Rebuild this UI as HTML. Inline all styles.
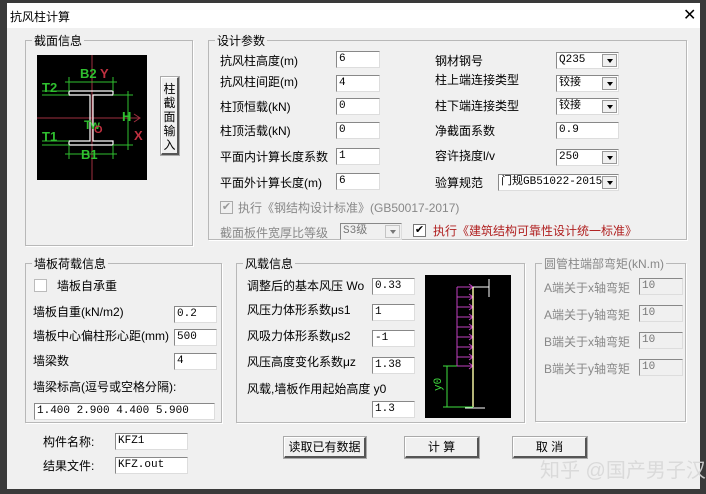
<!DOCTYPE html>
<html><head><meta charset="utf-8"><style>
*{box-sizing:border-box;margin:0;padding:0}
body{width:706px;height:494px;background:#3a3a3a;font-family:"Liberation Sans","Noto Sans CJK SC","WenQuanYi Zen Hei",sans-serif;font-size:12px;color:#000;position:relative;overflow:hidden}
.win{position:absolute;left:7px;top:3px;width:693px;height:486px;background:#f0f0f0}
.title{position:absolute;left:0;top:0;width:693px;height:25px;background:#fff}
.a{position:absolute;white-space:nowrap;margin-top:-1px}
.grp{position:absolute;border:1px solid #b8b8b8;box-shadow:1px 1px 0 #fff}
.gl{position:absolute;top:-9px;left:6px;background:#f0f0f0;padding:0 2px;font-size:12px}
.in{position:absolute;background:#fff;border-top:1px solid #888;border-left:1px solid #888;border-right:1px solid #ddd;border-bottom:1px solid #ddd;height:17px;font-size:11px;padding-left:2px;line-height:15px;font-family:"Liberation Mono","Noto Sans CJK SC",monospace}
.dis{background:#f0f0f0;color:#777}
.arr{position:absolute;right:1px;top:1px;width:15px;height:13px;background:#f0f0f0;border:1px solid #999}
.arr:after{content:"";position:absolute;left:4px;top:4px;border-left:3px solid transparent;border-right:3px solid transparent;border-top:4px solid #000}
.btn{position:absolute;background:#f0f0f0;border:1px solid #fff;border-right:2px solid #555;border-bottom:2px solid #555;text-align:center;font-size:12px;line-height:18px;outline:1px solid #aaa}
.cb{position:absolute;width:13px;height:13px;background:#fff;border:1px solid #777}
.g{color:#888}
</style></head><body>
<div class="win">
<div class="title"></div>
<div class="a" style="left:3px;top:6px;font-size:12px">抗风柱计算</div>
<div class="a" style="left:676px;top:3px;font-size:16px;font-weight:300">✕</div>

<div class="grp" style="left:18px;top:37px;width:168px;height:206px"><div class="gl">截面信息</div></div>
<svg class="a" style="left:30px;top:53px" width="110" height="125" viewBox="0 0 110 125">
<rect width="110" height="125" fill="#000"/>
<line x1="55" y1="0" x2="55" y2="125" stroke="#a03040"/>
<line x1="0" y1="63" x2="103" y2="63" stroke="#a03040"/>
<polyline points="97,59 103,63 97,67" fill="none" stroke="#a03040"/>
<path d="M32 36H76V40H56V86H76V90H32V86H53V40H32Z" fill="none" stroke="#fff" stroke-width="1.2"/>
<g stroke="#2fbf2f" fill="none">
<line x1="28" y1="27" x2="80" y2="27"/><line x1="32" y1="22" x2="32" y2="36"/><line x1="76" y1="22" x2="76" y2="36"/>
<line x1="28" y1="99" x2="80" y2="99"/><line x1="32" y1="90" x2="32" y2="104"/><line x1="76" y1="90" x2="76" y2="104"/>
<line x1="91" y1="36" x2="91" y2="95"/><line x1="76" y1="40" x2="96" y2="40"/><line x1="76" y1="90" x2="96" y2="90"/>
<line x1="5" y1="36" x2="32" y2="36"/><line x1="5" y1="40" x2="32" y2="40"/>
<line x1="5" y1="86" x2="32" y2="86"/><line x1="5" y1="90" x2="32" y2="90"/>
</g>
<g font-family="Liberation Sans" font-weight="bold" font-size="13">
<text x="43" y="23" fill="#2fbf2f">B2</text><text x="63" y="23" fill="#c03040">Y</text>
<text x="5" y="37" fill="#2fbf2f">T2</text><text x="5" y="86" fill="#2fbf2f">T1</text>
<text x="85" y="66" fill="#2fbf2f">H</text><text x="97" y="85" fill="#c03040">X</text>
<text x="44" y="104" fill="#2fbf2f">B1</text><text x="47" y="74" fill="#2fbf2f" font-size="12">Tw</text>
<text x="57" y="78" fill="#c03040" font-size="11">O</text></g>
</svg>
<div class="btn" style="left:154px;top:74px;width:18px;height:78px;line-height:14px;font-size:12px;padding-top:4px">柱<br>截<br>面<br>输<br>入</div>

<div class="grp" style="left:201px;top:37px;width:479px;height:200px"><div class="gl">设计参数</div></div>
<div class="a" style="left:213px;top:50px">抗风柱高度(m)</div><div class="in" style="left:329px;top:48px;width:44px">6</div>
<div class="a" style="left:213px;top:71px">抗风柱间距(m)</div><div class="in" style="left:329px;top:72px;width:44px">4</div>
<div class="a" style="left:213px;top:96px">柱顶恒载(kN)</div><div class="in" style="left:329px;top:95px;width:44px">0</div>
<div class="a" style="left:213px;top:120px">柱顶活载(kN)</div><div class="in" style="left:329px;top:119px;width:44px">0</div>
<div class="a" style="left:213px;top:146px">平面内计算长度系数</div><div class="in" style="left:329px;top:145px;width:44px">1</div>
<div class="a" style="left:213px;top:172px">平面外计算长度(m)</div><div class="in" style="left:329px;top:170px;width:44px">6</div>

<div class="a" style="left:428px;top:50px">钢材钢号</div><div class="in" style="left:549px;top:49px;width:63px">Q235<div class="arr"></div></div>
<div class="a" style="left:428px;top:69px">柱上端连接类型</div><div class="in" style="left:549px;top:72px;width:63px">铰接<div class="arr"></div></div>
<div class="a" style="left:428px;top:95px">柱下端连接类型</div><div class="in" style="left:549px;top:95px;width:63px">铰接<div class="arr"></div></div>
<div class="a" style="left:428px;top:120px">净截面系数</div><div class="in" style="left:549px;top:119px;width:63px">0.9</div>
<div class="a" style="left:428px;top:145px">容许挠度l/v</div><div class="in" style="left:549px;top:146px;width:63px">250<div class="arr"></div></div>
<div class="a" style="left:428px;top:172px">验算规范</div><div class="in" style="left:491px;top:171px;width:121px">门规GB51022-2015<div class="arr"></div></div>

<div class="cb" style="left:213px;top:198px;background:#f0f0f0;border-color:#aaa;color:#999;font-size:11px;line-height:11px;text-align:center">✔</div>
<div class="a g" style="left:231px;top:197px">执行《钢结构设计标准》(GB50017-2017)</div>
<div class="a g" style="left:213px;top:222px">截面板件宽厚比等级</div>
<div class="in dis" style="left:333px;top:220px;width:62px;background:#f0f0f0">S3级<div class="arr" style="opacity:.5"></div></div>
<div class="cb" style="left:406px;top:221px;font-size:11px;line-height:11px;text-align:center">✔</div>
<div class="a" style="left:426px;top:220px;color:#b02020">执行《建筑结构可靠性设计统一标准》</div>

<div class="grp" style="left:18px;top:260px;width:197px;height:160px"><div class="gl">墙板荷载信息</div></div>
<div class="cb" style="left:27px;top:276px;border-color:#bbb"></div>
<div class="a" style="left:50px;top:275px">墙板自承重</div>
<div class="a" style="left:26px;top:301px">墙板自重(kN/m2)</div><div class="in" style="left:167px;top:303px;width:43px">0.2</div>
<div class="a" style="left:26px;top:325px">墙板中心偏柱形心距(mm)</div><div class="in" style="left:167px;top:326px;width:43px">500</div>
<div class="a" style="left:26px;top:350px">墙梁数</div><div class="in" style="left:167px;top:350px;width:43px">4</div>
<div class="a" style="left:26px;top:376px">墙梁标高(逗号或空格分隔):</div>
<div class="in" style="left:27px;top:400px;width:181px">1.400 2.900 4.400 5.900</div>

<div class="grp" style="left:229px;top:260px;width:289px;height:160px"><div class="gl">风载信息</div></div>
<div class="a" style="left:240px;top:275px">调整后的基本风压 Wo</div><div class="in" style="left:365px;top:275px;width:43px">0.33</div>
<div class="a" style="left:240px;top:299px">风压力体形系数μs1</div><div class="in" style="left:365px;top:301px;width:43px">1</div>
<div class="a" style="left:240px;top:325px">风吸力体形系数μs2</div><div class="in" style="left:365px;top:327px;width:43px">-1</div>
<div class="a" style="left:240px;top:351px">风压高度变化系数μz</div><div class="in" style="left:365px;top:354px;width:43px">1.38</div>
<div class="a" style="left:240px;top:378px">风载,墙板作用起始高度 y0</div><div class="in" style="left:365px;top:398px;width:43px">1.3</div>
<svg class="a" style="left:418px;top:273px" width="86" height="143" viewBox="0 0 86 143">
<rect width="86" height="143" fill="#000"/>
<g stroke="#c040c0" fill="none"><line x1="32" y1="12" x2="32" y2="91"/>
<g id="ar"><line x1="32" y1="12" x2="48" y2="12"/><polyline points="44,9 48,12 44,15"/></g>
<use href="#ar" y="10"/><use href="#ar" y="20"/><use href="#ar" y="30"/><use href="#ar" y="40"/><use href="#ar" y="50"/><use href="#ar" y="60"/><use href="#ar" y="70"/><use href="#ar" y="79"/></g>
<line x1="48" y1="12" x2="48" y2="132" stroke="#f0f0a0" stroke-width="1.5"/>
<g stroke="#fff"><line x1="48" y1="12" x2="64" y2="12"/><line x1="64" y1="4" x2="64" y2="22"/><line x1="40" y1="133" x2="60" y2="133"/></g>
<g stroke="#3fdf3f"><line x1="22" y1="91" x2="22" y2="132"/><line x1="18" y1="91" x2="32" y2="91"/><line x1="18" y1="132" x2="48" y2="132"/></g>
<text x="16" y="116" fill="#3fdf3f" font-size="11" transform="rotate(-90 16 116)" font-family="Liberation Mono">y0</text>
</svg>

<div class="grp" style="left:528px;top:260px;width:151px;height:159px"><div class="gl" style="color:#888">圆管柱端部弯矩(kN.m)</div></div>
<div class="a g" style="left:537px;top:277px">A端关于x轴弯矩</div><div class="in dis" style="left:632px;top:275px;width:44px">10</div>
<div class="a g" style="left:537px;top:304px">A端关于y轴弯矩</div><div class="in dis" style="left:632px;top:302px;width:44px">10</div>
<div class="a g" style="left:537px;top:331px">B端关于x轴弯矩</div><div class="in dis" style="left:632px;top:329px;width:44px">10</div>
<div class="a g" style="left:537px;top:358px">B端关于y轴弯矩</div><div class="in dis" style="left:632px;top:356px;width:44px">10</div>

<div class="a" style="left:36px;top:431px">构件名称:</div><div class="in" style="left:108px;top:430px;width:73px">KFZ1</div>
<div class="a" style="left:36px;top:455px">结果文件:</div><div class="in" style="left:108px;top:454px;width:73px">KFZ.out</div>
<div class="btn" style="left:277px;top:434px;width:82px;height:21px">读取已有数据</div>
<div class="btn" style="left:398px;top:434px;width:74px;height:21px">计 算</div>
<div class="btn" style="left:506px;top:434px;width:74px;height:21px">取 消</div>
<div class="a" style="left:533px;top:452px;font-size:20px;color:rgba(215,215,215,.9)">知乎 @国产男子汉</div>
</div>
</body></html>
